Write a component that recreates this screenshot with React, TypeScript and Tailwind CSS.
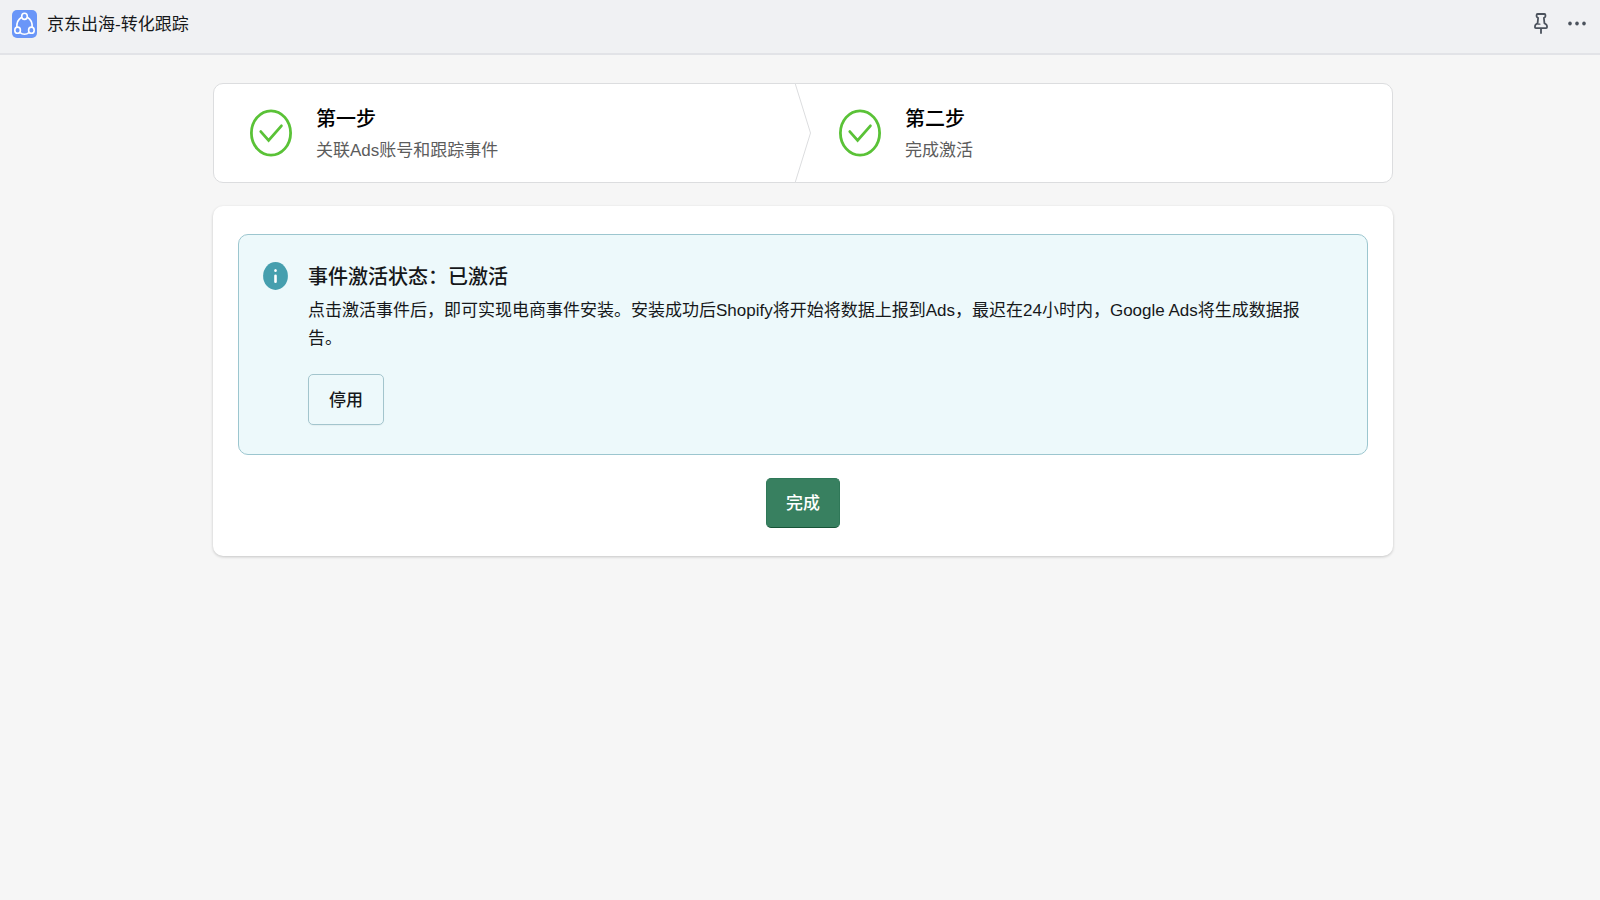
const steps = [
  { title: "第一步", text: "关联Ads账号和跟踪事件" },
  { title: "第二步", text: "完成激活" },
];

const AppLogo = () => (
  <svg width="25" height="28" viewBox="0 0 25 28" fill="none" stroke="#fff" strokeWidth="1.6" aria-hidden="true">
    <rect width="25" height="28" rx="5" fill="#6a96f8" stroke="none" />
    <path d="M9.6 7.2C6.6 9 4.6 13 4.8 17.2M15.4 7.2C18.4 9 20.4 13 20.2 17.2M8 22.6C10.6 24.6 14.4 24.6 17 22.6" />
    <ellipse cx="12.5" cy="6.3" rx="2.8" ry="3.1" />
    <ellipse cx="5.6" cy="20.2" rx="2.8" ry="3.1" />
    <ellipse cx="19.4" cy="20.2" rx="2.8" ry="3.1" />
  </svg>
);

const PinIcon = () => (
  <svg width="14" height="21" viewBox="0 0 14 21" fill="none" stroke="#4b525c" strokeWidth="1.8" strokeLinecap="round" strokeLinejoin="round">
    <path d="M3.6 1h6.8c.7 0 1 .4 1 1v1.2c0 .6-.3.9-.8 1.2L9.9 5l.5 5.2 1.5 1c.8.6 1.1 1.2 1.1 2v1c0 .6-.3.9-.9.9H1.9c-.6 0-.9-.3-.9-.9v-1c0-.8.3-1.4 1.1-2l1.5-1L4.1 5l-.7-.6c-.5-.3-.8-.6-.8-1.2V2c0-.6.3-1 1-1zM7 15.5V20" />
    <path d="M4 11.2h1.9" strokeWidth="1.2" />
  </svg>
);

const DotsIcon = () => (
  <svg width="18" height="5" viewBox="0 0 18 5" fill="#4b525c">
    <ellipse cx="2" cy="2.5" rx="1.8" ry="2.1" />
    <ellipse cx="9" cy="2.5" rx="1.8" ry="2.1" />
    <ellipse cx="16" cy="2.5" rx="1.8" ry="2.1" />
  </svg>
);

const CheckIcon = () => (
  <svg className="shrink-0" width="42" height="48" viewBox="0 0 42 48" fill="none" stroke="#5ac237" aria-hidden="true">
    <ellipse cx="21" cy="24" rx="19.6" ry="22.2" strokeWidth="2.8" />
    <path d="M10.8 22.6L18.6 31.4L31.4 16.8" strokeWidth="2.8" strokeLinecap="round" />
  </svg>
);

const InfoIcon = () => (
  <svg className="mt-[3px] shrink-0" width="25" height="28" viewBox="0 0 25 28" aria-hidden="true">
    <ellipse cx="12.5" cy="14" rx="12.4" ry="13.9" fill="#469fae" />
    <ellipse cx="12.5" cy="8.5" rx="1.3" ry="1.5" fill="#fff" />
    <rect x="11.2" y="12.4" width="2.6" height="8.6" rx="1.3" fill="#fff" />
  </svg>
);

const Step = ({ title, text }: { title: string; text: string }) => (
  <>
    <CheckIcon />
    <div className="flex flex-col gap-1 pt-1">
      <h2 className="text-[20px] leading-7 font-medium text-black">{title}</h2>
      <p className="text-[17px] leading-7 text-[#5c5c5c]">{text}</p>
    </div>
  </>
);

export default function App() {
  return (
    <div className="min-h-screen bg-[#f6f6f6] font-['Liberation_Sans','Noto_Sans_CJK_SC',sans-serif] text-[17px] text-[#16181a]">
      <header className="flex h-[55px] items-center justify-between border-b-2 border-[#e2e3e7] bg-[#f0f1f3] pr-3.5 pb-1.5 pl-3">
        <div className="flex items-center gap-2.5">
          <AppLogo />
          <h1 className="pt-0.5 leading-7">京东出海-转化跟踪</h1>
        </div>
        <div className="flex items-center gap-5">
          <button type="button" aria-label="固定">
            <PinIcon />
          </button>
          <button type="button" aria-label="更多" className="flex h-7 items-center">
            <DotsIcon />
          </button>
        </div>
      </header>

      <main className="pt-7 pl-1.5">
        <div className="mx-auto flex max-w-[1180px] flex-col gap-[23px]">
          <section className="flex rounded-[10px] border border-[#dcdddf] bg-white">
            <div className="flex flex-1 items-center gap-6 py-[17px] pl-9">
              <Step {...steps[0]} />
            </div>
            <svg className="-my-px w-4 shrink-0 self-stretch" viewBox="0 0 16 100" preserveAspectRatio="none" fill="#fff" aria-hidden="true">
              <path d="M0 0L15.5 50L0 100" stroke="#dcdddf" />
            </svg>
            <div className="flex flex-1 items-center gap-6 py-[17px] pr-2 pl-7">
              <Step {...steps[1]} />
            </div>
          </section>

          <section className="rounded-[10px] bg-white px-[25px] py-7 shadow-[0_1px_3px_rgba(0,0,0,0.2)]">
            <div className="flex gap-5 rounded-[10px] border border-[#9cc6cf] bg-[#edf9fb] pt-6 pr-9 pb-[29px] pl-6">
              <InfoIcon />
              <div>
                <h2 className="text-[20px] leading-9 font-medium">事件激活状态：已激活</h2>
                <p className="mt-0.5 leading-7">
                  点击激活事件后，即可实现电商事件安装。安装成功后Shopify将开始将数据上报到Ads，最迟在24小时内，Google Ads将生成数据报告。
                </p>
                <button type="button" className="mt-[21px] h-[51px] rounded-[5px] border border-[#a3c5cd] px-5 pt-0.5 font-medium shadow-[0_1px_1px_rgba(0,0,0,0.04)]">
                  停用
                </button>
              </div>
            </div>
            <div className="mt-[23px] flex justify-center">
              <button type="button" className="h-[50px] rounded-[5px] border border-[#2f7858] border-b-[#175437] bg-[#388060] px-[19px] pt-0.5 font-medium text-white">
                完成
              </button>
            </div>
          </section>
        </div>
      </main>
    </div>
  );
}
